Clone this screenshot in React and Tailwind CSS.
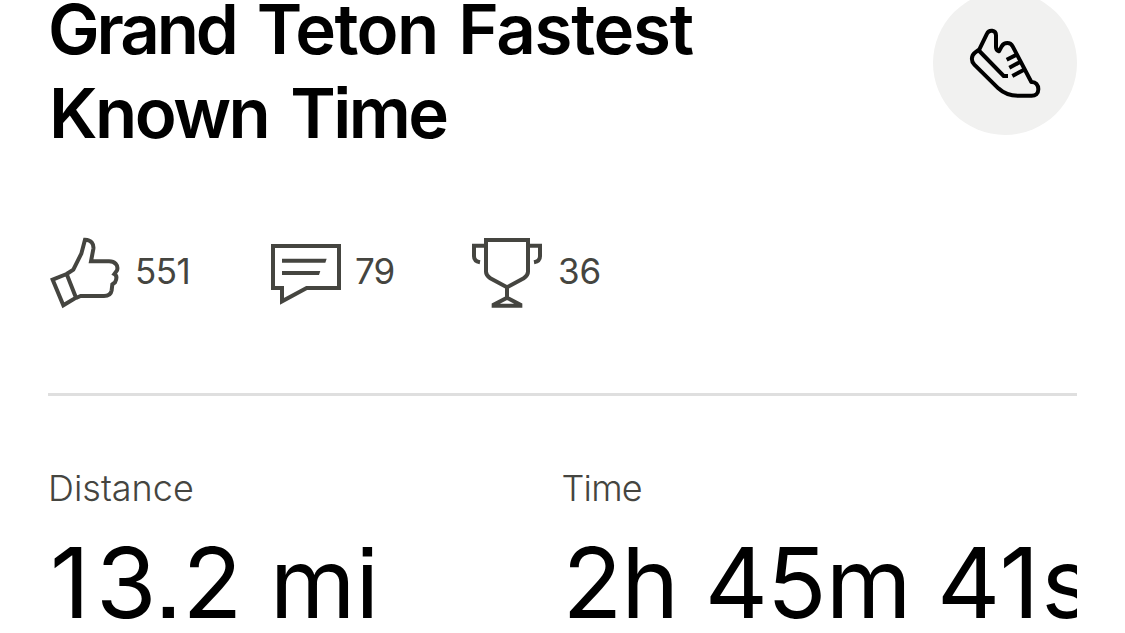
import React from 'react';

const ShoeIcon = () => (
  <svg viewBox="0 0 216 216" className="size-[72px]" fill="none" stroke="#000" strokeWidth="12" strokeLinejoin="round">
    <path d="M31 67 L54 20 C60 7 81 8 81 25 V60 C81 66 84 71 90 73 L98 58 C106 45 124 45 131 58 L187 165 C200 164 208 174 208 187 C208 200 199 206.500 188 206.500 H148 C122 206.500 104 199 88 184 L16 113 C6 103 6 86 18 77 Z" />
    <path d="M28 69 L104 147 H117" strokeLinejoin="miter" />
    <path d="M113 98 L145 82 M121 122 L157 103 M130 147 L168 127" />
  </svg>
);

const KudosIcon = () => (
  <svg viewBox="0 0 216 216" className="size-[72px]" fill="none" stroke="#454540" strokeWidth="12">
    <path d="M8 128 L40 205 L78 182 L50 111 Z" />
    <path d="M50 111 L70 98 L94 50 L105 8 C124 8 132 22 130 36 L123 73 H175 C195 72 206 86 201 100 L193 111 C202 116 199 128 195 136 L187 142 L185 160 C183 171 175 177 162 177 H92 L78 183" />
  </svg>
);

const CommentIcon = () => (
  <svg viewBox="0 0 216 216" className="size-[72px]" fill="none" stroke="#454540" strokeWidth="12">
    <path d="M36 153 H9 V27 H207 V153 H110 L36 193 Z" stroke="none" />
    <path d="M36 193 V153 H9 V27 H207 V153 H110 Z" />
    <path d="M36 65 H170 L166 77 H36 Z M36 102 H151 L147 114 H36 Z" fill="#454540" stroke="none" />
  </svg>
);

const TrophyIcon = () => (
  <svg viewBox="0 0 216 216" className="size-[72px]" fill="none" stroke="#454540" strokeWidth="12">
    <path d="M45 9 H171 V104 C171 112 165 119 158 124 L108 151 L58 124 C51 119 45 112 45 104 Z" />
    <path d="M108 151 V182 L68 203 V206 H148 V203 L108 182" />
    <path d="M45 26 H9 V58 C9 68 16 74 27 76 M171 26 H207 V58 C207 68 200 74 189 76" />
  </svg>
);

export default function App() {
  return (
    <div className="h-[633px] w-[1125px] overflow-hidden bg-white px-12 font-['Inter',sans-serif] text-black [font-feature-settings:'ss07']">
      {/* Title and activity type */}
      <header className="-mt-[13px] flex h-[250px] items-start justify-between">
        <h1 className="w-[700px] text-[69px] leading-[84px] font-semibold tracking-[-1.3px]">
          <span className="tracking-[-3.1px] [word-spacing:6.5px]">Grand </span>
          <span className="tracking-[-1.6px] [word-spacing:5px]">Teton </span>
          Fastest <br />
          <span className="ml-px tracking-[-2.5px] [word-spacing:7px]">Known </span>
          <span className="tracking-[-2.6px]">Time</span>
        </h1>
        <div className="mt-1 flex size-36 items-center justify-center rounded-full bg-[#f1f1f0]">
          <ShoeIcon />
        </div>
      </header>

      {/* Kudos, comments, achievements */}
      <div className="flex h-[72px] items-center pl-0.5 text-[35px] leading-[42px] text-[#454540]">
        <div className="flex w-[220px] items-center gap-[13px]">
          <KudosIcon />
          <span className="mt-[-4px] tracking-[-0.5px]">551</span>
        </div>
        <div className="flex w-[201px] items-center gap-[13px]">
          <CommentIcon />
          <span className="mt-[-4px] tracking-[-1px]">79</span>
        </div>
        <div className="flex items-center gap-[15px]">
          <TrophyIcon />
          <span className="mt-[-4px]">36</span>
        </div>
      </div>

      <hr className="mt-[84px] border-t-[3px] border-[#dfdfdf]" />

      {/* Stats */}
      <div className="mt-[70px] grid grid-cols-2 overflow-hidden whitespace-nowrap">
        <div className="min-w-0">
          <div className="text-[36px] leading-[44px] font-light text-[#454540]">Distance</div>
          <div className="mt-[14px] pl-0.5 text-[98px] leading-[118px]">
            <span className="tracking-[6px]">1</span>3.2 mi
          </div>
        </div>
        <div className="min-w-0">
          <div className="-ml-px text-[36px] leading-[44px] font-light tracking-[-0.8px] text-[#454540]">Time</div>
          <div className="mt-[14px] text-[98px] leading-[118px] tracking-[-1px]">
            2h 45m 4<span className="tracking-[2px]">1</span>s
          </div>
        </div>
      </div>
    </div>
  );
}
